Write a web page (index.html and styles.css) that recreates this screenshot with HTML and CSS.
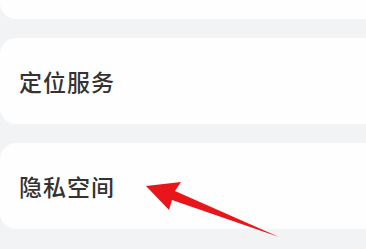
FILE: index.html
```html
<!DOCTYPE html>
<html lang="zh-CN">
<head>
  <meta charset="UTF-8">
  <meta name="viewport" content="width=device-width, initial-scale=1.0">
  <title>设置</title>
  <link rel="stylesheet" href="styles.css">
</head>
<body>

<div class="settings">
  <div class="item item-end"></div>
  <div class="item"><span class="label">定位服务</span></div>
  <div class="item"><span class="label">隐私空间</span></div>
</div>

<svg class="arrow" width="366" height="249" viewBox="0 0 366 249">
  <polygon points="146,186 181,182 175,191 279,237 172,200 169,210" fill="#e8161b"/>
</svg>

</body>
</html>
```

FILE: styles.css
```css
html, body {
  margin: 0;
  height: 100%;
}
body {
  position: relative;
  overflow: hidden;
  background: #f2f3f5;
  font-family: "Noto Sans CJK SC", "Noto Sans", sans-serif;
}
.settings {
  display: flex;
  flex-direction: column;
  gap: 19px;
}
.item {
  height: 86px;
  display: flex;
  align-items: center;
  padding-left: 19px;
  background: #fefefe;
  border-radius: 16px 0 0 16px;
}
.item-end {
  height: 19px;
  border-radius: 0 0 0 16px;
}
.label {
  font-size: 23px;
  font-weight: 500;
  letter-spacing: 1px;
  color: #333;
}
.arrow {
  position: absolute;
  top: 0;
  left: 0;
}
```
